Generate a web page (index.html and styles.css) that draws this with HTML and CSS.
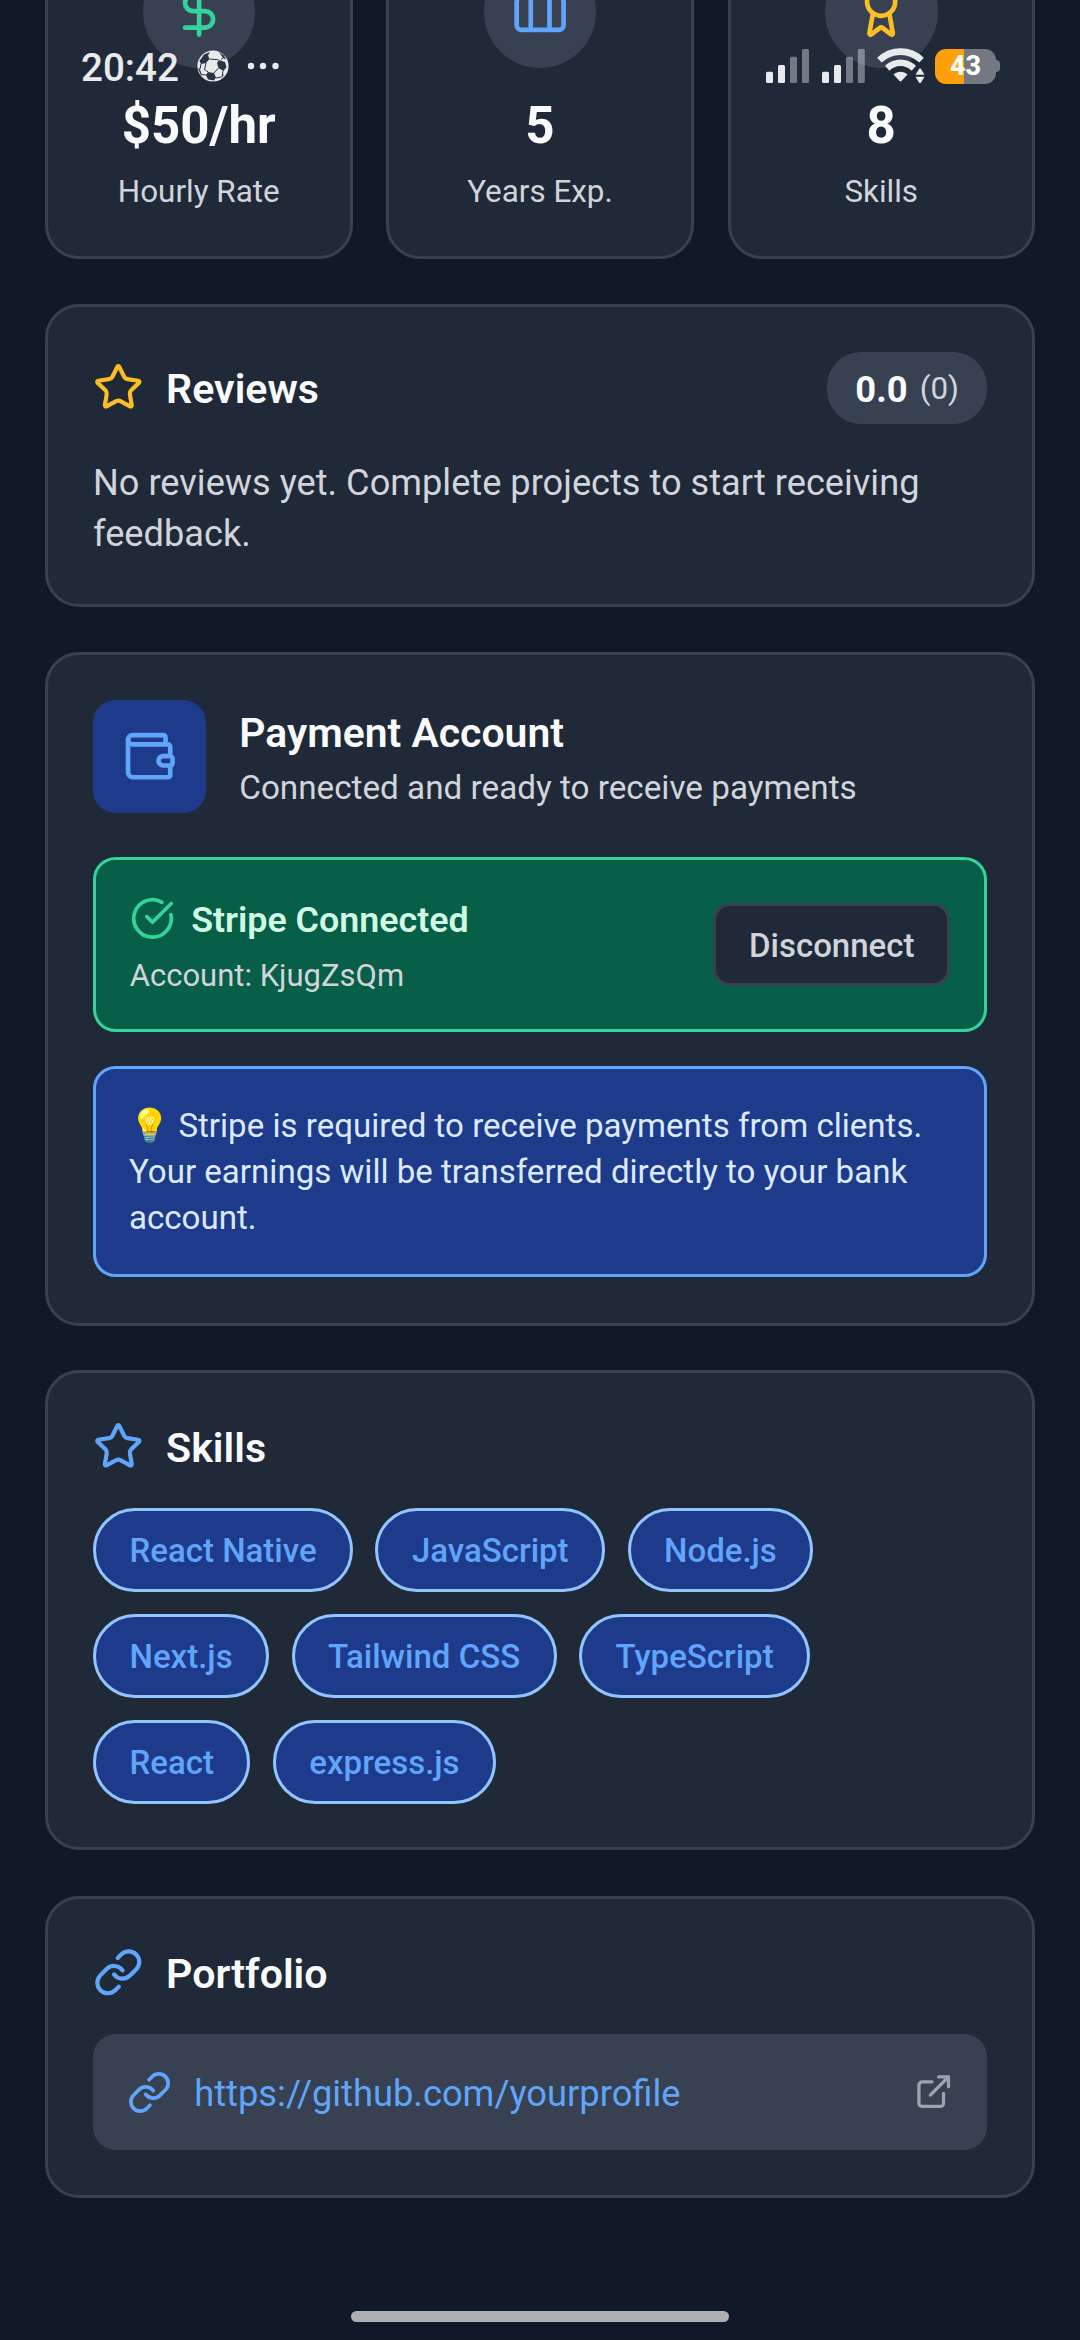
FILE: index.html
```html
<!DOCTYPE html>
<html lang="en">
<head>
<meta charset="utf-8">
<title>Profile</title>
<link rel="stylesheet" href="styles.css">
</head>
<body>
<div class="screen">
  <svg class="defs" width="0" height="0" aria-hidden="true">
    <symbol id="star" viewBox="0 0 24 24"><path d="M11.525 2.295a.53.53 0 0 1 .95 0l2.31 4.679a2.123 2.123 0 0 0 1.595 1.16l5.166.756a.53.53 0 0 1 .294.904l-3.736 3.638a2.123 2.123 0 0 0-.611 1.878l.882 5.14a.53.53 0 0 1-.771.56l-4.618-2.428a2.122 2.122 0 0 0-1.973 0L6.396 21.01a.53.53 0 0 1-.77-.56l.881-5.139a2.122 2.122 0 0 0-.611-1.879L2.16 9.795a.53.53 0 0 1 .294-.906l5.165-.755a2.122 2.122 0 0 0 1.597-1.16z"/></symbol>
    <symbol id="link" viewBox="0 0 24 24"><path d="M10 13a5 5 0 0 0 7.54.54l3-3a5 5 0 0 0-7.07-7.07l-1.72 1.71"/><path d="M14 11a5 5 0 0 0-7.54-.54l-3 3a5 5 0 0 0 7.07 7.07l1.71-1.71"/></symbol>
  </svg>

  <main class="content">
    <section class="stats">
      <div class="card stat">
        <div class="stat-icon"><svg class="icon i56 green" viewBox="0 0 24 24"><path d="M12 2v20"/><path d="M17 5H9.5a3.5 3.5 0 0 0 0 7h5a3.5 3.5 0 0 1 0 7H6"/></svg></div>
        <div class="stat-value">$50/hr</div>
        <div class="stat-label">Hourly Rate</div>
      </div>
      <div class="card stat">
        <div class="stat-icon"><svg class="icon i56 blue" viewBox="0 0 24 24"><path d="M16 20V4a2 2 0 0 0-2-2h-4a2 2 0 0 0-2 2v16"/><rect width="20" height="14" x="2" y="6" rx="2"/></svg></div>
        <div class="stat-value">5</div>
        <div class="stat-label">Years Exp.</div>
      </div>
      <div class="card stat">
        <div class="stat-icon"><svg class="icon i56 amber" viewBox="0 0 24 24"><path d="m15.477 12.89 1.515 8.526a.5.5 0 0 1-.81.47l-3.58-2.687a1 1 0 0 0-1.197 0l-3.586 2.686a.5.5 0 0 1-.81-.469l1.514-8.526"/><circle cx="12" cy="8" r="6"/></svg></div>
        <div class="stat-value">8</div>
        <div class="stat-label">Skills</div>
      </div>
    </section>

    <section class="card panel reviews">
      <header class="head head-tall">
        <svg class="icon i50 amber"><use href="#star"/></svg>
        <h2 class="title">Reviews</h2>
        <div class="rating"><span class="score">0.0</span><span class="count">(0)</span></div>
      </header>
      <p class="empty">No reviews yet. Complete projects to start receiving feedback.</p>
    </section>

    <section class="card panel payment">
      <header class="account">
        <div class="tile"><svg class="icon i56 blue" viewBox="0 0 24 24"><path d="M19 7V4a1 1 0 0 0-1-1H5a2 2 0 0 0 0 4h15a1 1 0 0 1 1 1v4h-3a2 2 0 0 0 0 4h3a1 1 0 0 0 1-1v-2a1 1 0 0 0-1-1"/><path d="M3 5v14a2 2 0 0 0 2 2h15a1 1 0 0 0 1-1v-4"/></svg></div>
        <div class="account-text">
          <h2 class="title">Payment Account</h2>
          <p class="subtitle">Connected and ready to receive payments</p>
        </div>
      </header>
      <div class="connected">
        <div class="connected-info">
          <div class="connected-title"><svg class="icon i45 green" viewBox="0 0 24 24"><path d="M21.801 10A10 10 0 1 1 17 3.335"/><path d="m9 11 3 3L22 4"/></svg><span>Stripe Connected</span></div>
          <div class="connected-account">Account: KjugZsQm</div>
        </div>
        <button class="disconnect">Disconnect</button>
      </div>
      <p class="note">💡 Stripe is required to receive payments from clients. Your earnings will be transferred directly to your bank account.</p>
    </section>

    <section class="card panel skills">
      <header class="head">
        <svg class="icon i50 blue"><use href="#star"/></svg>
        <h2 class="title">Skills</h2>
      </header>
      <div class="chips">
        <span class="chip">React Native</span><span class="chip">JavaScript</span><span class="chip">Node.js</span><span class="chip">Next.js</span><span class="chip">Tailwind CSS</span><span class="chip">TypeScript</span><span class="chip">React</span><span class="chip">express.js</span>
      </div>
    </section>

    <section class="card panel portfolio">
      <header class="head">
        <svg class="icon i50 blue"><use href="#link"/></svg>
        <h2 class="title">Portfolio</h2>
      </header>
      <a class="url">
        <svg class="icon i45 blue"><use href="#link"/></svg>
        <span class="url-text">https://github.com/yourprofile</span>
        <svg class="icon i39 gray" viewBox="0 0 24 24"><path d="M15 3h6v6"/><path d="M10 14 21 3"/><path d="M18 13v6a2 2 0 0 1-2 2H5a2 2 0 0 1-2-2V8a2 2 0 0 1 2-2h6"/></svg>
      </a>
    </section>
  </main>

  <div class="statusbar">
    <span class="clock">20:42</span>
    <svg class="ball" viewBox="0 0 32 32"><circle cx="16" cy="16" r="15.6" fill="#e9eaec"/><g fill="#2b3442"><path d="M7 4.5 13 2l-2 3.5L12.500 9 9 13 4 14 2.500 11z"/><path d="m22 10 6 2 1.500 5-3 4-5-3-1.500-5z"/><path d="m11 22 6 1 2 4.500-2 3-6-1-2-4.500z"/><path d="m22 2 5 3.500 2 4-3-1.500z"/><path d="m.8 18 2 1 2 5.500-.5 1.500z"/><path d="m24.500 26 3-2-3 4z"/></g><path d="m12.500 9 9 .8M9 13l-1.500 6.500L11 22m6 1 4.500-5M24 9.500l2-1.500M26 21l-.8 5M19 28l5-1M4.500 24.500l5 .6M4 14 3 19" fill="none" stroke="#2b3442" stroke-width="1"/></svg>
    <svg class="dots" viewBox="0 0 32 8"><g fill="#e9eaec"><circle cx="4" cy="4" r="3.200"/><circle cx="16" cy="4" r="3.200"/><circle cx="28.500" cy="4" r="3.200"/></g></svg>
    <svg class="signal" viewBox="0 0 99 34"><g fill="#e9eaec"><rect x="0" y="22.700" width="7" height="11.300" rx="1.500"/><rect x="12" y="16" width="7" height="18" rx="1.500"/><rect x="56" y="22.700" width="7" height="11.300" rx="1.500"/><rect x="68" y="16" width="7" height="18" rx="1.500"/></g><g fill="#fff" opacity=".38"><rect x="24" y="7.700" width="7" height="26.300" rx="1.500"/><rect x="36" y="0" width="7" height="34" rx="1.500"/><rect x="80" y="7.700" width="7" height="26.300" rx="1.500"/><rect x="91.800" y="0" width="7" height="34" rx="1.500"/></g></svg>
    <svg class="wifi" viewBox="0 0 48 36"><g fill="none" stroke="#e9eaec" stroke-width="6.600"><path d="M2.400 12.200C14.500 .8 32.500 .8 44.600 12.200"/><path d="M10.200 20.200c8-7.200 18.600-7.200 26.600 0"/></g><path d="M16.500 26.500c4-3.600 10-3.600 14 0l-5.800 6.300a1.700 1.700 0 0 1-2.400 0z" fill="#e9eaec"/><path d="M38.500 26.700 42 20.900a1.200 1.200 0 0 1 2 0l3.500 5.800z" fill="#e9eaec"/><path d="m38.500 28.700 3.500 5.800a1.200 1.200 0 0 0 2 0l3.500-5.800z" fill="#e9eaec"/></svg>
    <div class="battery"><div class="battery-body"><span>43</span></div><div class="battery-nub"></div></div>
  </div>
  <div class="home-indicator"></div>
</div>
</body>
</html>
```
FILE: styles.css
```css
* { box-sizing: border-box; margin: 0; padding: 0; }
body { background: #111827; font-family: Roboto, "Noto Sans", "Noto Color Emoji", sans-serif; }
.screen { position: relative; width: 1080px; height: 2340px; overflow: hidden; background: #111827; }
.defs { display: block; }

.content { display: flex; flex-direction: column; padding: 0 45px; margin-top: -84px; }
.card { background: #1f2937; border: 3px solid #374151; border-radius: 34px; }
.panel { padding: 45px; }

.icon { flex: none; fill: none; stroke: currentColor; stroke-width: 2; stroke-linecap: round; stroke-linejoin: round; }
.i56 { width: 56.25px; height: 56.25px; }
.i50 { width: 50.6px; height: 50.6px; }
.i45 { width: 45px; height: 45px; }
.i39 { width: 39.4px; height: 39.4px; }
.green { color: #34d399; }
.blue { color: #60a5fa; }
.amber { color: #fbbf24; }
.gray { color: #9ca3af; }

.stats { display: grid; grid-template-columns: repeat(3, 1fr); gap: 33.75px; height: 343px; margin-bottom: 45px; }
.stat { display: flex; flex-direction: column; align-items: center; padding-top: 36px; }
.stat-icon { display: flex; align-items: center; justify-content: center; width: 112.5px; height: 112.5px; padding-bottom: 1px; border-radius: 50%; background: #374151; }
.stat-value { margin-top: 27.5px; font-size: 51px; font-weight: 700; line-height: 62px; color: #f9fafb; }
.stat-label { margin-top: 16px; font-size: 31.4px; line-height: 38px; color: #d1d5db; }

.head { display: flex; align-items: center; gap: 22.5px; height: 58px; }
.head-tall { height: 72px; }
.head .icon { margin-bottom: 2px; }
.title { font-size: 41.1px; font-weight: 600; line-height: 50px; color: #f9fafb; }
.head .title { padding-top: 2px; }
.account-text .title { font-size: 40.9px; }

.reviews { height: 303px; margin-bottom: 45px; }
.rating { display: flex; align-items: center; gap: 12px; height: 72px; margin-left: auto; padding: 0 28px; border-radius: 34px; background: #374151; }
.score { padding-top: 3px; font-size: 36.4px; font-weight: 700; color: #f9fafb; }
.count { font-size: 31.4px; color: #d1d5db; }
.empty { margin-top: 33px; font-size: 36.2px; line-height: 51px; color: #d1d5db; }

.payment { height: 674px; margin-bottom: 44px; }
.account { display: flex; align-items: center; gap: 33.75px; height: 113px; }
.tile { display: flex; align-items: center; justify-content: center; width: 112.5px; height: 113px; border-radius: 22.5px; background: #1e3a8a; }
.account-text { padding-top: 4px; }
.subtitle { margin-top: 8px; font-size: 33.25px; line-height: 44px; color: #d1d5db; }
.connected { display: flex; align-items: center; justify-content: space-between; height: 175px; margin-top: 44px; padding: 0 33.75px; border: 3px solid #34d399; border-radius: 22.5px; background: #065f46; }
.connected-title { display: flex; align-items: center; gap: 16.4px; height: 48px; font-size: 35.85px; font-weight: 600; color: #d1fae5; }
.connected-title span { padding-top: 4px; }
.connected-account { margin-top: 15px; font-size: 31px; line-height: 38px; color: #d1d5db; }
.disconnect { width: 237px; height: 83px; padding-top: 2px; border: 3px solid #374151; border-radius: 17px; background: #1f2937; font: 500 33px Roboto, sans-serif; color: #d1d5db; }
.note { height: 211px; margin-top: 34px; padding: 33.5px 33px; border: 3px solid #60a5fa; border-radius: 22.5px; background: #1e3a8a; font-size: 33.1px; line-height: 46.2px; color: #dbeafe; }

.skills { height: 480px; margin-bottom: 46px; }
.chips { display: flex; flex-wrap: wrap; gap: 22.4px; width: 800px; margin-top: 32px; }
.chip { display: flex; align-items: center; height: 83.6px; padding: 1px 33.5px 0; border: 3px solid #93c5fd; border-radius: 45px; background: #1e3a8a; font-size: 33px; font-weight: 500; color: #60a5fa; }

.portfolio { height: 302px; }
.url { display: flex; align-items: center; height: 116px; margin-top: 32px; padding: 0 33.75px; border-radius: 22.5px; background: #374151; color: #60a5fa; }
.url-text { flex: 1; padding: 3px 0 0 22.5px; font-size: 36.3px; }

.statusbar { position: absolute; top: 44px; left: 0; display: flex; align-items: center; width: 1080px; height: 44px; padding: 0 80px 0 81px; }
.clock { padding-top: 2px; width: 116px; font-size: 38.6px; font-weight: 500; color: #e9eaec; }
.ball { width: 32px; height: 32px; }
.dots { width: 32px; height: 8px; margin-left: 18px; }
.signal { width: 99px; height: 34px; margin-left: auto; }
.wifi { width: 48px; height: 36px; margin-left: 12px; }
.battery { display: flex; align-items: center; margin-left: 10px; }
.battery-body { display: flex; align-items: center; justify-content: center; width: 61px; height: 35px; border-radius: 11px; background: linear-gradient(90deg, #ff9f0a 29px, #737881 29px); font-size: 27px; font-weight: 800; color: #fff; }
.battery-nub { width: 4px; height: 12px; border-radius: 0 5px 5px 0; background: #737881; }

.home-indicator { position: absolute; left: 351px; bottom: 18px; width: 378px; height: 11px; border-radius: 6px; background: #aeafb3; }
```
